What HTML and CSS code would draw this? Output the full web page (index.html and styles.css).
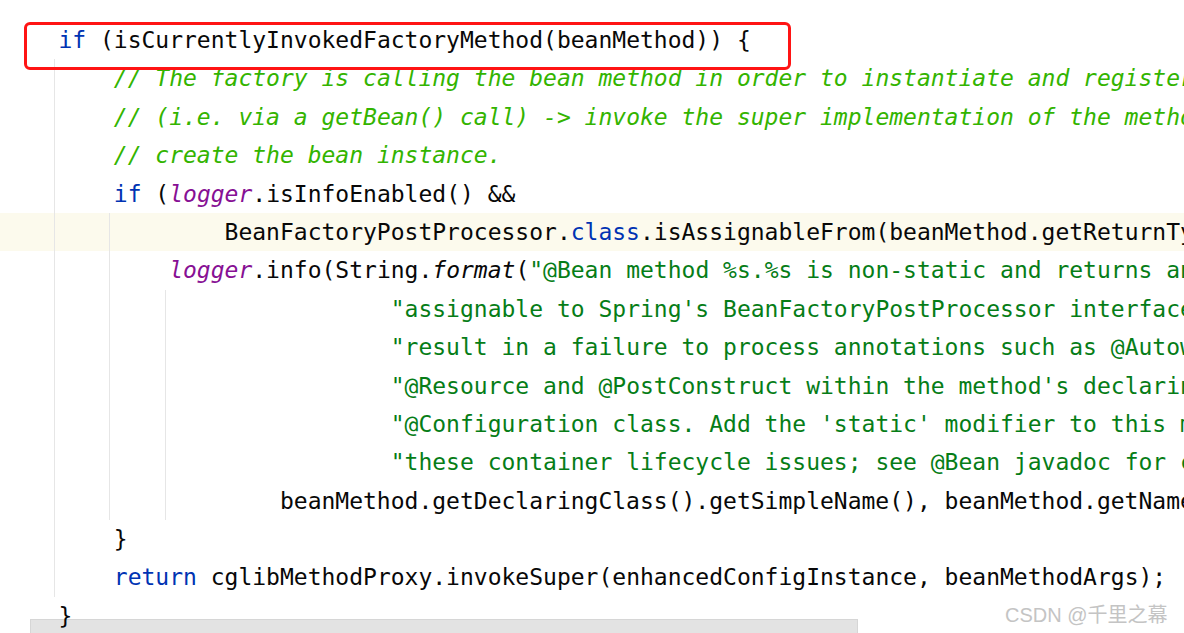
FILE: index.html
```html
<!DOCTYPE html>
<html lang="en">
<head>
    <meta charset="UTF-8">
    <title>ConfigurationClassEnhancer</title>
    <link rel="stylesheet" href="styles.css">
</head>
<body>

    <div class="editor">
        <div class="code">
            <div class="line">    <span class="kw">if</span> (isCurrentlyInvokedFactoryMethod(beanMethod)) {</div>
            <div class="line">        <span class="cm">// The factory is calling the bean method in order to instantiate and register the bean</span></div>
            <div class="line">        <span class="cm">// (i.e. via a getBean() call) -&gt; invoke the super implementation of the method to actually</span></div>
            <div class="line">        <span class="cm">// create the bean instance.</span></div>
            <div class="line">        <span class="kw">if</span> (<span class="field">logger</span>.isInfoEnabled() &amp;&amp;</div>
            <div class="line current">                BeanFactoryPostProcessor.<span class="kw">class</span>.isAssignableFrom(beanMethod.getReturnType())) {</div>
            <div class="line">            <span class="field">logger</span>.info(String.<span class="static">format</span>(<span class="str">"@Bean method %s.%s is non-static and returns an object "</span> +</div>
            <div class="line">                            <span class="str">"assignable to Spring's BeanFactoryPostProcessor interface. This will "</span> +</div>
            <div class="line">                            <span class="str">"result in a failure to process annotations such as @Autowired, "</span> +</div>
            <div class="line">                            <span class="str">"@Resource and @PostConstruct within the method's declaring "</span> +</div>
            <div class="line">                            <span class="str">"@Configuration class. Add the 'static' modifier to this method to avoid "</span> +</div>
            <div class="line">                            <span class="str">"these container lifecycle issues; see @Bean javadoc for complete details."</span>,</div>
            <div class="line">                    beanMethod.getDeclaringClass().getSimpleName(), beanMethod.getName()));</div>
            <div class="line">        }</div>
            <div class="line">        <span class="kw">return</span> cglibMethodProxy.invokeSuper(enhancedConfigInstance, beanMethodArgs);</div>
            <div class="line">    }</div>
        </div>

        <!-- indent guides -->
        <div class="guide guide-outer"></div>
        <div class="guide guide-if"></div>
        <div class="guide guide-call"></div>

        <div class="hscroll"></div>
        <div class="mark-box"></div>
        <div class="watermark">CSDN @千里之幕</div>
    </div>

</body>
</html>
```

FILE: styles.css
```css
html, body {
    margin: 0;
    padding: 0;
    background: #ffffff;
    overflow: hidden;
    width: 100%;
    height: 100%;
}

.editor {
    position: relative;
    width: 1184px;
    height: 633px;
    overflow: hidden;
}

.code {
    padding-top: 21px;
    font-family: "DejaVu Sans Mono", "Liberation Mono", monospace;
    font-size: 23px;
    color: #080808;
}

.line {
    position: relative;
    z-index: 1;
    height: 38.4px;
    line-height: 38.4px;
    padding-left: 3px;
    white-space: pre;
}

.line.current {
    z-index: 0;
    background: #fcfaed;
}

.kw { color: #0033b3; }
.cm { color: #33b400; font-style: italic; }
.str { color: #067d17; }
.field { color: #871094; font-style: italic; }
.static { font-style: italic; }

/* Indent guides */
.guide {
    position: absolute;
    width: 1px;
    background: #e6e6e6;
}

.guide-outer { left: 54px; top: 59px; height: 538px; }
.guide-if { left: 109px; top: 213px; height: 307px; }
.guide-call { left: 165px; top: 290px; height: 230px; }

.hscroll {
    position: absolute;
    left: 30px;
    top: 619px;
    width: 826px;
    height: 16px;
    background: #e3e3e3;
    border-top: 1px solid #d6d6d6;
    border-right: 1px solid #d6d6d6;
    border-left: 1px solid #d6d6d6;
}

.mark-box {
    position: absolute;
    z-index: 2;
    left: 24px;
    top: 22px;
    width: 761px;
    height: 42px;
    border: 3px solid #ff1414;
    border-radius: 6px;
}

.watermark {
    position: absolute;
    z-index: 2;
    left: 1005px;
    top: 599px;
    font-family: "Liberation Sans", "Noto Sans CJK SC", sans-serif;
    font-size: 20px;
    color: #c4c4c4;
    text-shadow: 0 0 1px #ffffff;
}
```
